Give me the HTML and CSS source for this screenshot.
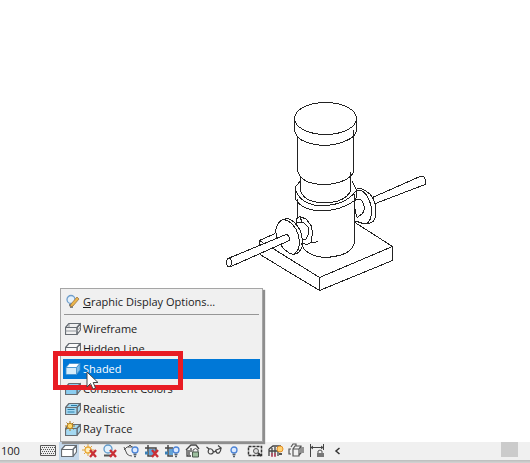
FILE: index.html
```html
<!DOCTYPE html>
<html lang="en">
<head>
<meta charset="utf-8">
<title>3D View</title>
<link rel="stylesheet" href="styles.css">
</head>
<body>
<svg class="defs" aria-hidden="true">
  <defs>
    <g id="box" stroke="#666c72" stroke-linejoin="round" stroke-width="1.2">
      <path d="M.5 6.500 4 2.500H15.500L12 6.500Z"/>
      <path d="M12 6.500 15.500 2.500V9L12 13.500Z"/>
      <path d="M.5 6.500H12V13.500H.5Z"/>
    </g>
    <g id="bulb">
      <circle cx="11" cy="7" r="3" fill="#dceaff" stroke="#4b83d6" stroke-width="1.300"/>
      <path d="M9.500 11.500h3M10 13.500h2" stroke="#55606c" stroke-width="1.300"/>
    </g>
    <path id="cross" d="M8 7l6 7M14 7l-6 7" stroke="#c92f36" stroke-width="2.300"/>
  </defs>
</svg>
<main class="view">
  <svg class="model" viewBox="220 95 210 200" role="img" aria-label="Pump model, wireframe">
    <path d="M259.500 247V240.500L275 233.500M260 241l5 3M273 248.500 319.500 277.500 392.500 246.500 355 222.500M260 254.500 319.500 290.500 392.500 260.500V246.500M319.500 277.500V290.500"/>
    <path d="M372.500 197.500 420 176.500Q424 175.500 425 179V184.500L375.500 203.500"/>
    <path d="M356 189.500Q360 187 366 191Q374 196 375.500 206Q377 216 373.500 221Q369 225 363 223.500L355.500 221M356 191Q362 188 367 196Q372 204 371.500 213Q371 220 367.500 223M355 200.500Q361 197 363 203Q366 210 362 214L357 217.500M354.500 205Q355 212 357 217"/>
    <path d="M297.500 199V219M354.500 194V243Q352 250 346 253Q336 257.500 324 257.500Q310 256 304 249L301 243"/>
    <path d="M301 180 295 187.500V197.500Q299 208 316 210.500Q339 212 354 201L356.500 197V190L352 181M295 188Q299 203 317 205.500Q344 207 356 191"/>
    <path d="M300.500 177V190Q303 201 320 202.500Q344 204 350.500 191V172"/>
    <path d="M297.500 136V170Q299 178 308 182Q317 185 328 184.500Q343 183 351 176L353.500 172V130"/>
    <ellipse cx="325.500" cy="118.500" rx="31" ry="16"/>
    <path d="M294.500 119V131Q297 139 306 142Q315 145.500 327 145.500Q344 144 354 136L356.500 131V119"/>
    <path d="M296 224V219L300 216.500 306 219 311.500 226 312.500 233 311 242.500 307 244.500 301 243M297 223 303 222 308 227 308.500 234 306 239 303 240M300 217 302 222M311 243 318 241.500"/>
    <path d="M276 229Q278 221 283 219.500L288 218.500Q295 221 300 230Q303 238 302 247Q300 253 294 254.500Q287 254 280 244Q275 236 276 229ZM283 219.500Q290 220 296 229Q301 240 298.500 249L294 254.500"/>
    <path class="pipe" d="M228 258.500 286 234.500Q290 235 289.500 240.500L231 266.500"/>
    <ellipse cx="229" cy="262.500" rx="2.500" ry="4"/>
  </svg>
</main>

<div class="menu" role="menu" aria-label="Visual style">
  <button class="item options" role="menuitem">
    <svg viewBox="0 0 16 16"><circle cx="6" cy="5.500" r="4" fill="#e5f1fb" stroke="#6f9ecb" stroke-width="1.300"/><path d="M4 11h4M5 13h3" stroke="#58616a" stroke-width="1.400"/><path d="M6 10 12 3l2 2-6 7-3 1Z" fill="#edb64a" stroke="#9a7646" stroke-width=".8"/></svg>
    <span><u>G</u>raphic Display Options...</span>
  </button>
  <hr>
  <button class="item" role="menuitem"><svg viewBox="0 0 16 16"><use href="#box"/><path d="M.5 10H12L15.500 6M4 3V6" stroke="#92979c"/></svg>Wireframe</button>
  <button class="item" role="menuitem"><svg viewBox="0 0 16 16"><use href="#box" fill="#fafafa"/></svg>Hidden Line</button>
  <button class="item selected" role="menuitem"><svg viewBox="0 0 16 16"><g stroke="#3f8ecb" stroke-width=".8"><path d="M1 6.500 4.500 2.500H15L11.500 6.500Z" fill="#fff"/><path d="M11.500 6.500 15 2.500V9L11.500 13.500Z" fill="#7cbde9"/><path d="M1 6.500H11.500V13.500H1Z" fill="#d5ecfa"/></g></svg>Shaded</button>
  <button class="item" role="menuitem"><svg viewBox="0 0 16 16"><use href="#box" fill="#8bcdf0"/></svg>Consistent Colors</button>
  <button class="item" role="menuitem"><svg viewBox="0 0 16 16"><use href="#box" fill="#a5d9f2"/><path d="M2.500 8.500h7M2.500 11h7M6 4.500h6" stroke="#287eaa"/></svg>Realistic</button>
  <button class="item" role="menuitem"><svg viewBox="0 0 16 16"><use href="#box" y="1" fill="#a5d9f2"/><path d="M5 0v10M0 5h10M1.500 1.500l7 7M8.500 1.500l-7 7" stroke="#a9781f"/><circle cx="5" cy="5" r="2.700" fill="#ffd86a" stroke="#b98322"/></svg>Ray Trace</button>
  <div class="marker"></div>
  <svg class="cursor" viewBox="0 0 14 20"><path d="M1 1V16L4.500 12.500 7 18 9.500 17 7.200 11.500H12Z"/></svg>
</div>

<footer class="bar">
  <span class="scale">100</span>
  <div class="tools">
    <button aria-label="Detail level"><svg viewBox="0 0 16 16"><path d="M.5 2.500h15v10H.5Z" fill="#eee" stroke="#555"/><path d="M2 4.500h13M1 6.500h13M2 8.500h13M1 10.500h13" stroke="#555" stroke-dasharray="1 1"/></svg></button>
    <button class="active" aria-label="Visual style"><svg viewBox="0 0 16 16"><use href="#box" fill="#fff"/></svg></button>
    <button aria-label="Sun path off"><svg viewBox="0 0 16 16"><path d="M6 1v12M0 7h12M2 3l8 8M10 3l-8 8" stroke="#e0a13b"/><circle cx="6" cy="7" r="3" fill="#fff1bd" stroke="#e9a936" stroke-width="1.300"/><use href="#cross"/></svg></button>
    <button aria-label="Shadows off"><svg viewBox="0 0 16 16"><circle cx="6" cy="6" r="4" fill="#e2f1fc" stroke="#5e99cb" stroke-width="1.300"/><path d="M2 12.500h8" stroke="#555" stroke-width="2"/><use href="#cross"/></svg></button>
    <button aria-label="Rendering"><svg viewBox="0 0 16 16"><path d="M1 4l3 7q2 2 5 2M1 7l3-3h6M5 4l2-2 2 2" stroke="#555"/><use href="#bulb" x="1"/></svg></button>
    <button aria-label="Crop view off"><svg viewBox="0 0 16 16"><path d="M4 2v11h5M1 5h11v4" stroke="#444" stroke-width="1.500"/><path d="M5 6h6v6H5Z" fill="#65a4d6"/><path d="M1 10h3" stroke="#3a7fb5" stroke-width="3"/><use href="#cross"/></svg></button>
    <button aria-label="Crop region"><svg viewBox="0 0 16 16"><path d="M4 2v11h5M1 5h8" stroke="#444" stroke-width="1.500"/><path d="M5 6h4v6H5Z" fill="#65a4d6"/><path d="M1 10h3" stroke="#3a7fb5" stroke-width="3"/><use href="#bulb" x="1"/></svg></button>
    <button aria-label="Lock view"><svg viewBox="0 0 16 16"><path d="M1 7 6 2h5l3 4M2 7v6h4M4 7v5M6 5v4" stroke="#444" stroke-width="1.300"/><path d="M8 9V7q2.500-3 5 0v2" stroke="#555"/><path d="M7.500 9h6v5h-6Z" fill="#9dbf9f" stroke="#4a594c"/></svg></button>
    <button aria-label="Temporary hide"><svg viewBox="0 0 16 16"><path d="M.5 4 3 6q3-1 4 2 2 2 3-1 3-1 5-2L12 2.500M3 6q-2 4 1 5 4 0 3-3M10 7q0 4 3 3 2-2 2-5" stroke="#444" stroke-width="1.200"/></svg></button>
    <button aria-label="Reveal hidden"><svg viewBox="0 0 16 16"><use href="#bulb" x="-3"/></svg></button>
    <button aria-label="View properties"><svg viewBox="0 0 16 16"><path d="M1.500 3.500h13v9h-13Z" stroke="#333" stroke-width="1.500" stroke-dasharray="3 1"/><circle cx="9" cy="8" r="2.500" fill="#ddd" stroke="#555"/><path d="M11 10l3 3" stroke="#333" stroke-width="2"/></svg></button>
    <button aria-label="Analytical model"><svg viewBox="0 0 16 16"><path d="M1 6l4-3h8M1 6v7M4 5v8M7 4v9M10 6v7M1 8h12" stroke="#444" stroke-width="1.300"/><path d="M4 10v4M7 10v4" stroke="#bd4b65" stroke-width="1.500"/><circle cx="12" cy="6" r="3" fill="#ffd273" stroke="#e58f25"/><path d="M11 11h3" stroke="#555" stroke-width="2"/></svg></button>
    <button aria-label="Displacement sets"><svg viewBox="0 0 16 16"><path d="M5 6h6v7H5ZM5 6l2-3h6v7l-2 2M11 6l2-3M3 6H1v5h2M8 3V1H5L3 4M15 4v6" stroke="#555" stroke-width="1.200"/></svg></button>
    <button aria-label="Reveal constraints"><svg viewBox="0 0 16 16"><path d="M1.500 1v13M14.500 1v6M2 4.500h12M4 3 2 4.500 4 6M12 3l2 1.500L12 6" stroke="#444"/><path d="M9 10V8q2-2 4 0v2" stroke="#555"/><path d="M8 10h7v4H8Z" fill="#777"/></svg></button>
    <button aria-label="Collapse"><svg viewBox="0 0 16 16"><path d="M9.500 5 6 8l3.500 3" stroke="#333" stroke-width="1.500"/></svg></button>
  </div>
  <div class="track"><div class="thumb"></div></div>
</footer>
</body>
</html>
```
FILE: styles.css
```css
* {
  box-sizing: border-box;
}

body {
  position: relative;
  display: flex;
  flex-direction: column;
  min-height: 100vh;
  margin: 0;
  background: #fff;
  color: #1c1c1c;
  font: 11px/20px "Open Sans", "Noto Sans", sans-serif;
}

svg {
  display: block;
  fill: none;
}

button {
  padding: 0;
  border: 0;
  background: none;
  color: inherit;
  font: inherit;
}

.defs {
  position: absolute;
  width: 0;
  height: 0;
}

.view {
  flex: 1;
  padding: 95px 100px 0 220px;
}

.model {
  width: 210px;
  height: 200px;
  fill: #fff;
  stroke: #222;
  stroke-width: 1;
  shape-rendering: crispEdges;
}

.model path {
  fill: none;
}

.model .pipe {
  fill: #fff;
}

.menu {
  position: absolute;
  left: 60px;
  bottom: 21px;
  width: 203px;
  padding: 2px;
  border: 1px solid #a5a5a5;
  background: #f0f0f0;
  box-shadow: 2px 2px 1px #8e8e8e;
}

.item {
  display: flex;
  align-items: center;
  gap: 2px;
  width: 100%;
  height: 20px;
  padding-left: 2px;
  white-space: nowrap;
}

.item svg {
  width: 16px;
  height: 16px;
}

.options {
  height: 21px;
}

.menu hr {
  height: 1px;
  margin: 2px 1px 4px;
  border: 0;
  background: #969696;
}

.selected {
  background: #0078d7;
  color: #fff;
}

.marker {
  position: absolute;
  left: -8px;
  top: 62px;
  width: 130px;
  height: 39px;
  border: 5px solid #e81c24;
}

.cursor {
  position: absolute;
  left: 25px;
  top: 82px;
  width: 14px;
  height: 20px;
  fill: #fff;
  stroke: #444;
}

.bar {
  display: flex;
  height: 21px;
  padding-bottom: 3px;
  background: linear-gradient(#f0f0f0 18px, #bcbcbc 18px, #d4d4d4 21px);
}

.scale {
  width: 38px;
  padding-left: 1px;
  line-height: 17px;
}

.tools {
  display: grid;
  grid-template-columns: repeat(15, 1fr);
  width: 310px;
}

.tools button {
  display: flex;
  align-items: center;
  justify-content: center;
}

.tools svg {
  width: 16px;
  height: 16px;
}

.tools .active {
  background: #c5d9ec;
}

.track {
  display: flex;
  flex: 1;
  justify-content: flex-end;
  padding-right: 12px;
}

.thumb {
  width: 17px;
  height: 15px;
  background: #cbcbcb;
}
```
